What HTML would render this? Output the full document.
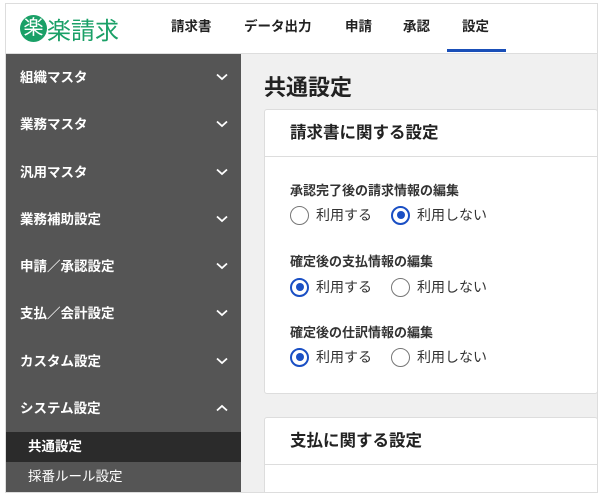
<!DOCTYPE html>
<html><head><meta charset="utf-8"><style>
*{margin:0;padding:0;box-sizing:border-box}
body{width:600px;height:490px;overflow:hidden;background:#fff;font-family:"Liberation Sans","Noto Sans CJK JP",sans-serif;position:relative}
.frame{position:absolute;left:5px;top:3px;width:593px;height:490px;border:1px solid #ddd;background:#f0f0f0;overflow:hidden}
.hdr{position:absolute;left:0;top:0;right:0;height:50px;background:#fff;border-bottom:1px solid #ddd}
.logo{position:absolute;left:14px;top:7px;display:flex;align-items:center}
.logo .c{width:27px;height:27px;border-radius:50%;background:#1aa067;color:#fff;font-size:20px;line-height:27px;text-align:center}
.logo .t{color:#1aa067;font-size:24px;margin-left:0px}
.nav{position:absolute;top:0;height:50px;font-size:13.5px;font-weight:bold;color:#222;line-height:46px}
.ul{position:absolute;left:441px;top:45px;width:59px;height:3px;background:#1a4fb8}
.side{position:absolute;left:0;top:50px;width:235px;height:440px;background:#555}
.it{height:47.3px;color:#fff;font-size:13.5px;font-weight:bold;padding-left:14px;line-height:47px;position:relative}
.it svg{position:absolute;right:13px;top:19px}
.sub{height:30px;line-height:30px;color:#fff;font-size:13.5px;padding-left:22px}
.sub.a{background:#2b2b2b;font-weight:bold}
h1{position:absolute;left:258px;top:66px;font-size:22px;font-weight:bold;color:#222}
.card{position:absolute;left:258px;width:334px;background:#fff;border:1px solid #ddd;border-radius:3px}
.ch{height:47px;border-bottom:1px solid #ddd;font-size:16.5px;font-weight:bold;color:#222;padding-left:25px;line-height:47px}
.q{position:absolute;left:25px;font-size:13px;font-weight:bold;color:#333}
.r{position:absolute;left:25px;display:flex;align-items:center;font-size:14px;color:#333}
.rad{width:19px;height:19px;border-radius:50%;border:1.5px solid #777;margin-right:7px;position:relative}
.rad.on{border:2px solid #1a4fc4}
.rad.on::after{content:"";position:absolute;left:3.5px;top:3.5px;width:8px;height:8px;border-radius:50%;background:#1a4fc4}
.gap{width:19px}
</style></head><body>
<div class="frame">
<div class="hdr">
<div class="logo"><div class="c">楽</div><div class="t">楽請求</div></div>
<div class="nav" style="left:165px">請求書</div>
<div class="nav" style="left:238px">データ出力</div>
<div class="nav" style="left:339px">申請</div>
<div class="nav" style="left:397px">承認</div>
<div class="nav" style="left:456px">設定</div>
<div class="ul"></div>
</div>
<div class="side">
<div class="it">組織マスタ<svg width="12" height="8"><path d="M1 1.5L6 6L11 1.5" stroke="#fff" stroke-width="1.8" fill="none"/></svg></div>
<div class="it">業務マスタ<svg width="12" height="8"><path d="M1 1.5L6 6L11 1.5" stroke="#fff" stroke-width="1.8" fill="none"/></svg></div>
<div class="it">汎用マスタ<svg width="12" height="8"><path d="M1 1.5L6 6L11 1.5" stroke="#fff" stroke-width="1.8" fill="none"/></svg></div>
<div class="it">業務補助設定<svg width="12" height="8"><path d="M1 1.5L6 6L11 1.5" stroke="#fff" stroke-width="1.8" fill="none"/></svg></div>
<div class="it">申請／承認設定<svg width="12" height="8"><path d="M1 1.5L6 6L11 1.5" stroke="#fff" stroke-width="1.8" fill="none"/></svg></div>
<div class="it">支払／会計設定<svg width="12" height="8"><path d="M1 1.5L6 6L11 1.5" stroke="#fff" stroke-width="1.8" fill="none"/></svg></div>
<div class="it">カスタム設定<svg width="12" height="8"><path d="M1 1.5L6 6L11 1.5" stroke="#fff" stroke-width="1.8" fill="none"/></svg></div>
<div class="it" style="height:47px">システム設定<svg width="12" height="8"><path d="M1 6.5L6 2L11 6.5" stroke="#fff" stroke-width="1.8" fill="none"/></svg></div>
<div class="sub a">共通設定</div>
<div class="sub">採番ルール設定</div>
</div>
<h1>共通設定</h1>
<div class="card" style="top:105px;height:285px">
<div class="ch">請求書に関する設定</div>
<div class="q" style="top:70px">承認完了後の請求情報の編集</div>
<div class="r" style="top:95px"><span class="rad"></span>利用する<span class="gap"></span><span class="rad on"></span>利用しない</div>
<div class="q" style="top:141px">確定後の支払情報の編集</div>
<div class="r" style="top:167px"><span class="rad on"></span>利用する<span class="gap"></span><span class="rad"></span>利用しない</div>
<div class="q" style="top:212px">確定後の仕訳情報の編集</div>
<div class="r" style="top:237px"><span class="rad on"></span>利用する<span class="gap"></span><span class="rad"></span>利用しない</div>
</div>
<div class="card" style="top:413px;height:100px">
<div class="ch">支払に関する設定</div>
</div>
</div>
</body></html>
